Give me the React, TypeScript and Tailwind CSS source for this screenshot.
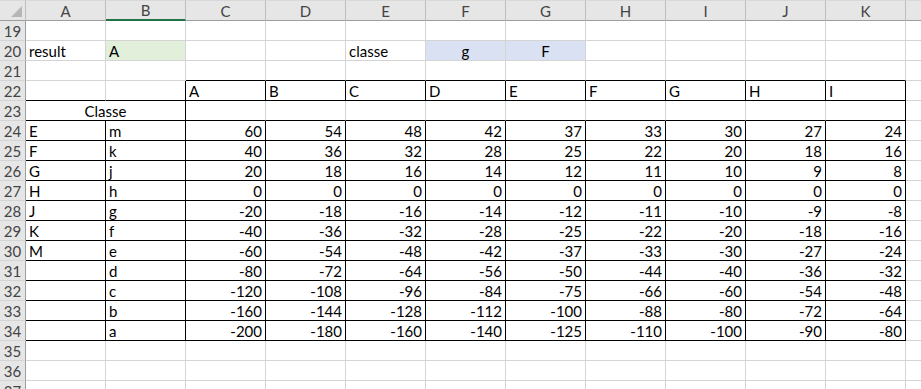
import React from "react";

const COLS = ["A", "B", "C", "D", "E", "F", "G", "H", "I", "J", "K"];

const TABLE: Record<number, (string | number)[]> = {
  24: ["E", "m", 60, 54, 48, 42, 37, 33, 30, 27, 24],
  25: ["F", "k", 40, 36, 32, 28, 25, 22, 20, 18, 16],
  26: ["G", "j", 20, 18, 16, 14, 12, 11, 10, 9, 8],
  27: ["H", "h", 0, 0, 0, 0, 0, 0, 0, 0, 0],
  28: ["J", "g", -20, -18, -16, -14, -12, -11, -10, -9, -8],
  29: ["K", "f", -40, -36, -32, -28, -25, -22, -20, -18, -16],
  30: ["M", "e", -60, -54, -48, -42, -37, -33, -30, -27, -24],
  31: ["", "d", -80, -72, -64, -56, -50, -44, -40, -36, -32],
  32: ["", "c", -120, -108, -96, -84, -75, -66, -60, -54, -48],
  33: ["", "b", -160, -144, -128, -112, -100, -88, -80, -72, -64],
  34: ["", "a", -200, -180, -160, -140, -125, -110, -100, -90, -80],
};

const ROWS = Array.from({ length: 19 }, (_, i) => 19 + i);

function rightBlack(row: number, c: number) {
  if (row === 22) return c >= 1;
  if (row === 23) return c === 1 || c === 10;
  if (row >= 24 && row <= 34) return true;
  return false;
}
function bottomBlack(row: number, c: number) {
  if (row === 21) return c >= 2;
  if (row >= 22 && row <= 34) return true;
  return false;
}

type CellInfo = { text: string; align: "left" | "right" | "center"; bg?: string };

function cellInfo(row: number, c: number): CellInfo | null {
  if (row === 20) {
    if (c === 0) return { text: "result", align: "left" };
    if (c === 1) return { text: "A", align: "left", bg: "green" };
    if (c === 4) return { text: "classe", align: "left" };
    if (c === 5) return { text: "g", align: "center", bg: "blue" };
    if (c === 6) return { text: "F", align: "center", bg: "blue" };
  }
  if (row === 22 && c >= 2) return { text: String.fromCharCode(65 + c - 2), align: "left" };
  if (TABLE[row]) {
    const v = TABLE[row][c];
    return { text: String(v), align: typeof v === "number" ? "right" : "left" };
  }
  return null;
}

function DataCell({ row, c }: { row: number; c: number }) {
  const info = cellInfo(row, c);
  const rb = rightBlack(row, c);
  const bb = bottomBlack(row, c);
  const bg = info?.bg === "green" ? "bg-[#e2efda]" : info?.bg === "blue" ? "bg-[#d9e1f2]" : "bg-white";
  const just =
    info?.align === "right" ? "justify-end" : info?.align === "center" ? "justify-center" : "justify-start";
  return (
    <div
      className={`h-[20px] box-border border-r border-b flex items-end px-[3px] overflow-hidden whitespace-nowrap ${bg} ${just} ${
        rb ? "border-r-black" : "border-r-[#d4d4d4]"
      } ${bb ? "border-b-black" : "border-b-[#d4d4d4]"}`}
    >
      {info?.text}
    </div>
  );
}

export default function App() {
  return (
    <div
      className="w-[921px] h-[389px] overflow-hidden bg-white text-black text-[15px] leading-[18px]"
      style={{ fontFamily: "Lato, 'Liberation Sans', sans-serif" }}
    >
      <div className="grid grid-cols-[26px_repeat(11,80px)_16px]">
        <div className="h-[21px] box-border border-r border-b border-r-[#bdbdbd] border-b-[#9e9e9e] bg-[#e6e6e6] border-t border-t-[#d9d9d9] relative">
          <svg className="absolute right-[3px] bottom-[3px]" width="11" height="11" viewBox="0 0 11 11">
            <polygon points="11,0 11,11 0,11" fill="#b6b6b6" />
          </svg>
        </div>
        {COLS.map((l) => (
          <div
            key={l}
            className={`h-[21px] box-border border-r border-t border-t-[#d9d9d9] border-r-[#bdbdbd] bg-[#e6e6e6] flex items-center justify-center text-[#444] ${
              l === "B" ? "border-b-2 border-b-[#217346]" : "border-b border-b-[#9e9e9e]"
            }`}
          >
            {l}
          </div>
        ))}
        <div className="h-[21px] box-border border-b border-t border-t-[#d9d9d9] border-b-[#9e9e9e] bg-[#e6e6e6]" />

        {ROWS.map((row) => (
          <React.Fragment key={row}>
            <div className="h-[20px] box-border border-r border-b border-r-[#9e9e9e] border-b-[#d4d4d4] bg-[#e6e6e6] flex items-center justify-center text-[#444]">
              {row}
            </div>
            {row === 23 ? (
              <>
                <div className="col-span-2 h-[20px] box-border border-r border-b border-r-black border-b-black flex items-end justify-center bg-white">
                  Classe
                </div>
                {COLS.slice(2).map((_, i) => (
                  <DataCell key={i} row={row} c={i + 2} />
                ))}
              </>
            ) : (
              COLS.map((_, c) => <DataCell key={c} row={row} c={c} />)
            )}
            <div className="h-[20px] box-border border-b border-b-[#d4d4d4] bg-white" />
          </React.Fragment>
        ))}
      </div>
    </div>
  );
}
